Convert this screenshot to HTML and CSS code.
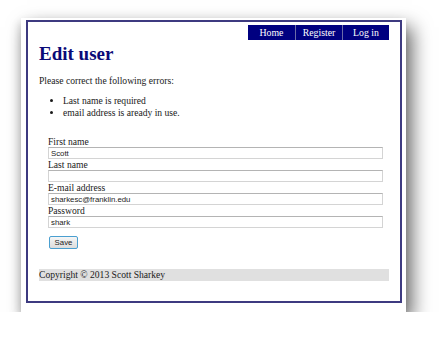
FILE: index.html
```html
<!DOCTYPE html>
<html lang="en">
<head>
    <meta charset="UTF-8">
    <title>Edit user</title>
    <link rel="stylesheet" href="styles.css">
</head>
<body>
    <div class="paper">
        <div class="frame">
            <div class="nav">
                <a href="#">Home</a>
                <a href="#">Register</a>
                <a href="#">Log in</a>
            </div>

            <h1>Edit user</h1>

            <p class="errors-title">Please correct the following errors:</p>
            <ul class="errors">
                <li>Last name is required</li>
                <li>email address is aready in use.</li>
            </ul>

            <form class="user-form">
                <label>First name</label>
                <input type="text" value="Scott">
                <label>Last name</label>
                <input type="text" value="">
                <label>E-mail address</label>
                <input type="text" value="sharkesc@franklin.edu">
                <label>Password</label>
                <input type="text" value="shark">
                <button type="button" class="save">Save</button>
            </form>

            <div class="footer">Copyright &copy; 2013 Scott Sharkey</div>
        </div>
    </div>
</body>
</html>
```

FILE: styles.css
```css
* {
    margin: 0;
    padding: 0;
    box-sizing: border-box;
}

html, body {
    background: #fff;
    font-family: "Liberation Serif", "Times New Roman", serif;
    font-size: 9.6px;
    color: #1a1a1a;
}

.paper {
    width: 385px;
    margin: 18px 0 0 21px;
    padding: 2px 4px 9px 5px;
    background: #fff;
    box-shadow: 6px 9px 18px rgba(0, 0, 0, 0.6), -2px 4px 8px rgba(0, 0, 0, 0.12);
}

.frame {
    border: 2px solid #3d3a80;
    padding: 3px 11px 20px 11px;
}

.nav {
    display: flex;
    justify-content: flex-end;
}

.nav a {
    width: 47px;
    height: 15px;
    line-height: 15px;
    text-align: center;
    background: #000080;
    color: #fff;
    font-size: 9.8px;
    text-decoration: none;
    border-left: 1px solid #6c6ca8;
}

.nav a:first-child {
    border-left: none;
}

h1 {
    margin-top: 3px;
    font-size: 19px;
    line-height: 22px;
    font-weight: bold;
    color: #0a0a78;
}

.errors-title {
    margin-top: 10px;
    line-height: 12px;
}

.errors {
    margin-top: 8px;
    padding-left: 24px;
    line-height: 12px;
}

.user-form {
    display: flex;
    flex-direction: column;
    align-items: flex-start;
    margin-top: 17px;
    padding: 0 6px 0 9px;
}

.user-form label {
    line-height: 11px;
}

.user-form input {
    width: 100%;
    height: 12px;
    padding: 0 2px;
    border: 1px solid #d4d4d4;
    border-top-color: #b4b4b4;
    font-family: "Liberation Sans", Arial, sans-serif;
    font-size: 7.8px;
    color: #222;
    outline: none;
}

.save {
    margin-top: 8px;
    margin-left: 1px;
    width: 29px;
    height: 13px;
    border: 1px solid #4a9fd0;
    border-radius: 2px;
    background: linear-gradient(#f6f6f6, #dcdcdc);
    font-family: "Liberation Sans", Arial, sans-serif;
    font-size: 7.8px;
    color: #222;
}

.footer {
    margin-top: 20px;
    height: 12px;
    line-height: 12px;
    background: #e0e0e0;
}
```
